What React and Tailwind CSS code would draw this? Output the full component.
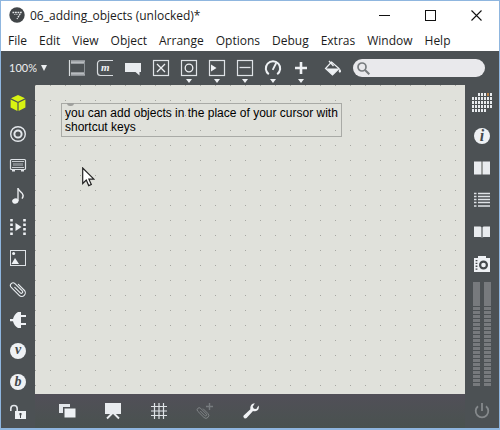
import React from "react";

const MENUS = ["File", "Edit", "View", "Object", "Arrange", "Options", "Debug", "Extras", "Window", "Help"];

function Icon({ size = 18, children }) {
  return (
    <svg width={size} height={size} viewBox={`0 0 ${size} ${size}`} fill="none" stroke="none" aria-hidden="true" className="shrink-0">
      {children}
    </svg>
  );
}

function Clip({ color }) {
  return (
    <g transform="rotate(45 9 9) translate(.5 1.500) scale(.92)">
      <path d="M5.500 9.200h8.500a1.500 1.500 0 0 0 0-3H2.800a2.800 2.800 0 0 0 0 5.700h12.200a3.900 3.900 0 0 0 0-7.800H6" transform="translate(0 .2)" stroke={color} strokeWidth="1.200" strokeLinecap="round" />
    </g>
  );
}

const LEFT = [
  ["Objects", (
    <Icon key="i">
      <path d="M9 1 16 4.300 9 7.800 2 4.300Z M1.600 5.400 8.400 8.800V17L1.600 13.400Z M16.400 5.400 9.600 8.800V17l6.800-3.600Z" fill="#d8f312" />
    </Icon>
  )],
  ["Packages", (
    <Icon key="i">
      <circle cx="9" cy="9" r="7.300" stroke="#e4e8ec" strokeWidth="1.400" />
      <circle cx="9" cy="9" r="3.600" stroke="#e4e8ec" strokeWidth="2" />
    </Icon>
  )],
  ["Plug-ins", (
    <Icon key="i">
      <rect x="1.500" y="3.500" width="15" height="10" rx="1" stroke="#dfe3e7" strokeWidth="1.200" />
      <path d="M3 5.500h12M3 11.500h12" stroke="#c8ccd0" />
      <path d="M4 8.500h10" stroke="#808589" strokeWidth="3" />
      <path d="M3 14h3v1.500H3zM12 14h3v1.500h-3z" fill="#dfe3e7" />
    </Icon>
  )],
  ["Audio", (
    <Icon key="i">
      <ellipse cx="6.300" cy="14" rx="3.200" ry="2.600" transform="rotate(-20 6.300 14)" fill="#eef1f4" />
      <path d="M9 14V1" stroke="#eef1f4" strokeWidth="1.300" />
      <path d="M9.200 1.500c.4 3 4.600 3.600 4.900 6.800.1 1.200-.4 2.400-1.100 3.300" stroke="#eef1f4" strokeWidth="1.500" />
    </Icon>
  )],
  ["Video", (
    <Icon key="i">
      <path d="M2.500 1v16M15.500 1v16" stroke="#eef1f4" strokeWidth="2.600" strokeDasharray="2.400 2.100" />
      <path d="M6.500 5 12.500 9l-6 4Z" fill="#eef1f4" />
    </Icon>
  )],
  ["Images", (
    <Icon key="i">
      <rect x="1.500" y="1.500" width="15" height="15" stroke="#dfe3e7" />
      <circle cx="4.600" cy="4.600" r="1.500" fill="#eef1f4" />
      <path d="M2.500 15 6 9l4 6Z" fill="#eef1f4" />
    </Icon>
  )],
  ["Snippets", <Icon key="i"><Clip color="#e9edf0" /></Icon>],
  ["Connections", (
    <Icon key="i">
      <path d="M1 8h3c.6-2.800 2.500-5.500 5-7h3V4h5v2h-5v6h5v2h-5v3H9c-2.500-1.500-4.400-4-5-6.800H1Z" fill="#eef1f4" />
    </Icon>
  )],
  ["Vizzie", (
    <span key="i" className="flex h-4 w-4 items-center justify-center rounded-full bg-[#eef1f4] pb-0.5 font-['Liberation_Serif',serif] text-[14px] leading-4 font-bold text-[#45494c] italic">v</span>
  )],
  ["Beap", (
    <span key="i" className="flex h-4 w-4 items-center justify-center rounded-full bg-[#eef1f4] font-['Liberation_Serif',serif] text-[14px] leading-4 font-bold text-[#45494c] italic">b</span>
  )],
  ["Unlock patcher", (
    <Icon key="i">
      <path d="M1.800 7V4.700a3.200 3.200 0 0 1 6.400 0V8" stroke="#e4e8ec" strokeWidth="1.600" />
      <rect x="6" y="7" width="11" height="8" fill="#eef1f4" />
      <path d="M10.500 9h2v2l-.5.500V14h-1v-2.500l-.5-.5Z" fill="#45494c" />
    </Icon>
  )],
];

const TOOLS = [
  ["Add object", false, (
    <Icon key="i">
      <path d="M1.500 1v16" stroke="#d9dde0" strokeWidth="1.200" />
      <path d="M3 2.500h14M3 15.500h14" stroke="#a5a9ad" strokeWidth="2.400" />
      <path d="M3 4h13M3 14h13" stroke="#e2e6e9" />
      <path d="M16.500 4v10" stroke="#8c9195" />
    </Icon>
  )],
  ["Add message", false, (
    <Icon key="i">
      <path d="M17 1.500H4.500a3 3 0 0 0-3 3v9a3 3 0 0 0 3 3H17" stroke="#d9dde0" strokeWidth="1.200" />
      <text x="5" y="12" fill="#f1f3f5" fontFamily="Liberation Serif, serif" fontSize="11" fontWeight="bold" fontStyle="italic">m</text>
    </Icon>
  )],
  ["Add comment", false, (
    <Icon key="i">
      <path d="M1 4h16v9h-1.500v3.500L11.500 13H1Z" fill="#e9ecef" />
    </Icon>
  )],
  ["Add toggle", false, (
    <Icon key="i">
      <rect x="1.500" y="1.500" width="15" height="15" stroke="#dfe3e7" strokeWidth="1.200" />
      <path d="m5 5 8 8m0-8-8 8" stroke="#eef1f4" strokeWidth="1.300" />
    </Icon>
  )],
  ["Add button", true, (
    <Icon key="i">
      <rect x="1.500" y="1.500" width="15" height="15" stroke="#dfe3e7" strokeWidth="1.200" />
      <circle cx="9" cy="9" r="3.800" stroke="#eef1f4" strokeWidth="1.300" />
    </Icon>
  )],
  ["Add number", true, (
    <Icon key="i">
      <rect x="1.500" y="1.500" width="15" height="15" stroke="#dfe3e7" strokeWidth="1.200" />
      <path d="M3 5.500 8.500 9 3 12.500Z" fill="#eef1f4" />
    </Icon>
  )],
  ["Add slider", true, (
    <Icon key="i">
      <rect x="1.500" y="1.500" width="15" height="15" stroke="#dfe3e7" strokeWidth="1.200" />
      <path d="M3.500 8.500h11" stroke="#dfe3e7" strokeWidth="1.300" />
    </Icon>
  )],
  ["Add dial", true, (
    <Icon key="i">
      <path d="M4.800 15.200A7.200 7.200 0 1 1 13.200 15.200" stroke="#eef1f4" strokeWidth="2" />
      <path d="M8.700 10.800 12.200 4" stroke="#eef1f4" strokeWidth="1.800" />
    </Icon>
  )],
  ["Add other", true, (
    <Icon key="i">
      <path d="M9 3v12M3 9h12" stroke="#eef1f4" strokeWidth="2.600" />
    </Icon>
  )],
];

const BOTTOM = [
  ["Layers", (
    <Icon key="i">
      <path d="M1 2h11v3H5v6H1Z" fill="#e3e6ea" />
      <rect x="6.500" y="6.500" width="11" height="9" fill="#eef1f4" />
    </Icon>
  )],
  ["Presentation mode", (
    <Icon key="i">
      <path d="M1 1h16v11H1Z" fill="#e9ecef" />
      <path d="M8.500 11 3 16.500M9.500 11l5.500 5.500" stroke="#e9ecef" strokeWidth="1.900" />
    </Icon>
  )],
  ["Grid", (
    <Icon key="i">
      <path d="M4.500 1v16M9 1v16M13.500 1v16M1 4.500h16M1 9h16M1 13.500h16" stroke="#dfe3e7" strokeWidth="1.200" />
    </Icon>
  )],
  ["Add snippet", (
    <Icon key="i">
      <g transform="translate(0 3.500) scale(.78)">
        <Clip color="#85898c" />
      </g>
      <path d="M13.500 1v7M10 4.500h7" stroke="#777b7f" strokeWidth="1.400" />
    </Icon>
  )],
  ["Tools", (
    <Icon key="i">
      <path d="M12.800 1.200 10.700 4.800l1.200 1.900 2.400.2 2.200-3.500c1 2.200-.1 5-2.500 5.700-1.100.4-2.100.3-3 0l-6.400 7c-1.300 1.300-4.200-.8-2.900-2.500l6.700-6.300C7.800 4.100 10 1.100 12.800 1.200Z" fill="#f1f3f5" />
    </Icon>
  )],
];

const RIGHT = [
  ["Inspector", (
    <span key="i" className="flex h-4 w-4 items-center justify-center rounded-full bg-[#eef1f4] font-['Liberation_Serif',serif] text-[16px] leading-4 font-bold text-[#45494c] italic">i</span>
  )],
  ["Reference", (
    <Icon key="i">
      <path d="M1 2.500h7v13H1zM10 2.500h7v13h-7z" fill="#e9ecef" />
      <path d="M8 2.500h2v13H8z" fill="#9da09f" />
    </Icon>
  )],
  ["Console", (
    <Icon key="i">
      <path d="M1 2.500h2.500M5 2.500h12M1 5.500h2.500M5 5.500h12M1 8.500h2.500M5 8.500h12M1 11.500h2.500M5 11.500h12M1 15h2.500M5 15h12" stroke="#dfe3e7" strokeWidth="1.400" />
    </Icon>
  )],
  ["Lessons", (
    <Icon key="i">
      <path d="M1 3.500h6.500l1 1v10l-1-.5H1zM17 3.500h-6.500l-1 1v10l1-.5H17z" fill="#e9ecef" />
      <path d="M8.500 4.500h1v10h-1z" fill="#85898b" />
    </Icon>
  )],
  ["Snapshots", (
    <Icon key="i">
      <path d="M5 1h8v2h4v14H1V3h4Z" fill="#eef1f4" />
      <circle cx="10.500" cy="10" r="3.400" stroke="#45494c" strokeWidth="2.200" />
      <path d="M3.500 5v10" stroke="#45494c" strokeWidth="1.800" strokeDasharray="1.300 1.500" />
    </Icon>
  )],
];

const MATRIX = [[6, 19], [0, 19], [0, 19], [0, 19], [0, 14]];

function MatrixIcon() {
  const cells = [];
  MATRIX.forEach(([from, to], row) => {
    for (let x = from; x < to; x += 3) {
      cells.push(
        <rect key={`${row}-${x}`} x={x} y={row * 4} width="2" height="3" fill={row === 0 && x === 15 ? "#b9824a" : "#e9ecef"} />
      );
    }
  });
  return <svg width="20" height="20" viewBox="0 0 20 20" aria-hidden="true">{cells}</svg>;
}

function Meter() {
  return (
    <div className="flex w-[7px] flex-col">
      <div className="h-6 bg-[#777a7d]" />
      {Array.from({ length: 20 }, (_, i) => (
        <div key={i} className="mt-px h-[3px] bg-[#777a7d]" />
      ))}
    </div>
  );
}

export default function App() {
  return (
    <div className="flex min-h-screen flex-col border border-b-2 border-[#8fb6df] bg-[#4c5154] font-['Open_Sans','Noto_Sans',sans-serif] text-[12px] text-[#1b1b1b]">
      <header className="bg-white">
        <div className="flex h-7 items-center">
          <svg width="16" height="16" viewBox="0 0 16 16" className="ml-2 shrink-0" aria-hidden="true">
            <circle cx="8" cy="8" r="7.700" fill="#414548" />
            <path d="M3.500 5.500h8.500L8 12" fill="none" stroke="#e4e6e8" strokeWidth="1.300" strokeDasharray="1.800 .7" />
            <path d="M5 7.500h4" stroke="#a9acae" strokeDasharray="1.500 .7" />
          </svg>
          <h1 className="ml-[5px] grow pt-0.5 whitespace-nowrap">06_adding_objects (unlocked)*</h1>
          <button aria-label="Minimize" className="flex h-7 w-[46px] items-center justify-center">
            <svg width="11" height="11" viewBox="0 0 11 11"><path d="M0 5.500h11" stroke="#111" /></svg>
          </button>
          <button aria-label="Maximize" className="flex h-7 w-[46px] items-center justify-center">
            <svg width="11" height="11" viewBox="0 0 11 11"><rect x=".5" y=".5" width="10" height="10" fill="none" stroke="#111" /></svg>
          </button>
          <button aria-label="Close" className="flex h-7 w-[46px] items-center justify-center">
            <svg width="11" height="11" viewBox="0 0 11 11"><path d="m.5.5 10 10m0-10-10 10" stroke="#111" strokeWidth="1.100" /></svg>
          </button>
        </div>
        <nav className="flex h-[22px] items-center gap-3 pt-0.5 pl-[7px]">
          {MENUS.map((m) => (
            <button key={m}>{m}</button>
          ))}
        </nav>
      </header>

      <div className="flex h-[34px] items-center">
        <label className="flex w-[62px] shrink-0 items-center gap-1 pl-2 text-[#eceef0]">
          <select aria-label="Zoom level" className="w-7 appearance-none bg-transparent font-['Lato',sans-serif] text-[11px]">
            <option>100%</option>
          </select>
          <svg width="6" height="6" viewBox="0 0 6 6" aria-hidden="true"><path d="M0 0h6L3 6Z" fill="#eceef0" /></svg>
        </label>
        {TOOLS.map(([label, menu, icon]) => (
          <button key={label} aria-label={label} className="relative flex h-full w-7 shrink-0 items-center justify-center">
            {icon}
            {menu && (
              <svg width="6" height="4" viewBox="0 0 6 4" className="absolute bottom-0.5 left-[11px]" aria-hidden="true">
                <path d="M0 0h6L3 4Z" fill="#eef1f4" />
              </svg>
            )}
          </button>
        ))}
        <button aria-label="Format palette" className="ml-1 flex h-full w-7 shrink-0 items-center justify-center">
          <Icon>
            <path d="M7.500 3 15 9.500 8.500 16 1.500 9.500Z" stroke="#eef1f4" strokeWidth="1.200" />
            <path d="M2 9.500h13L8.500 16Z" fill="#eef1f4" />
            <path d="M5 2l4.500 5" stroke="#eef1f4" strokeWidth="1.300" />
            <path d="M15.700 9.500c1 1.500 1.500 2.400 1.300 3.300-.3 1.100-2 1.100-2.300 0-.2-.9.300-1.800 1-3.300Z" fill="#eef1f4" />
          </Icon>
        </button>
        <label className="mr-[14px] ml-1.5 flex h-[18px] min-w-0 flex-1 items-center rounded-full bg-[#e9e9ec] pl-1">
          <svg width="13" height="13" viewBox="0 0 13 13" className="shrink-0" aria-hidden="true">
            <circle cx="5" cy="5" r="4" fill="none" stroke="#777b7e" strokeWidth="1.700" />
            <path d="m8 8 4.300 4.300" stroke="#777b7e" strokeWidth="2" />
          </svg>
          <input type="search" aria-label="Search" className="w-0 min-w-0 flex-1 bg-transparent px-1 text-[11px] outline-none" />
        </label>
      </div>

      <div className="flex grow">
        <nav className="flex w-[34px] shrink-0 flex-col pt-0.5">
          {LEFT.map(([label, icon]) => (
            <button key={label} aria-label={label} className="flex h-[31px] items-center justify-center last:mt-auto">{icon}</button>
          ))}
        </nav>

        <div className="flex min-w-0 grow flex-col">
          <main className="relative grow bg-[#e0e1db] bg-[radial-gradient(circle_at_0.5px_0.5px,#a6a7a2_0.7px,transparent_0.8px)] bg-size-[15px_15px] font-['Liberation_Sans',sans-serif]">
            <div className="absolute top-[18px] left-[26px] w-[281px] border border-[#a9aaa6] px-[3px] pt-0.5 pb-0.5 text-[12px] leading-[14px] text-black">
              <span className="absolute -top-px left-[5px] h-[3px] w-[7px] rounded-b-full bg-[#9fa09d]" />
              you can add objects in the place of your cursor with shortcut keys
            </div>
            <svg width="13" height="20" viewBox="0 0 13 20" className="absolute top-[82px] left-[47px]" aria-hidden="true">
              <path d="M.7 1v15.500l3.600-3.400 2.400 5.500 2.600-1.100-2.400-5.300h5Z" fill="#fff" stroke="#222" strokeWidth="1.200" />
            </svg>
          </main>
          <footer className="flex h-[34px] items-center bg-gradient-to-b from-[#514f58] to-[#49524f] pl-[9px]">
            {BOTTOM.map(([label, icon]) => (
              <button key={label} aria-label={label} className="flex h-full w-[46px] items-center justify-center">{icon}</button>
            ))}
          </footer>
        </div>

        <aside className="flex w-[34px] shrink-0 flex-col items-center">
          <button aria-label="Toolbox matrix" className="flex h-[35px] items-center"><MatrixIcon /></button>
          {RIGHT.map(([label, icon]) => (
            <button key={label} aria-label={label} className="flex h-8 w-full items-center justify-center">{icon}</button>
          ))}
          <div className="mt-0.5 flex gap-1" role="img" aria-label="Audio level">
            <Meter />
            <Meter />
          </div>
          <button aria-label="Audio on or off" className="mt-auto flex h-[34px] items-center">
            <Icon>
              <path d="M5 4.200a6.300 6.300 0 1 0 8 0" stroke="#85898c" strokeWidth="1.800" />
              <path d="M9 1v8" stroke="#85898c" strokeWidth="1.800" />
            </Icon>
          </button>
        </aside>
      </div>
    </div>
  );
}
